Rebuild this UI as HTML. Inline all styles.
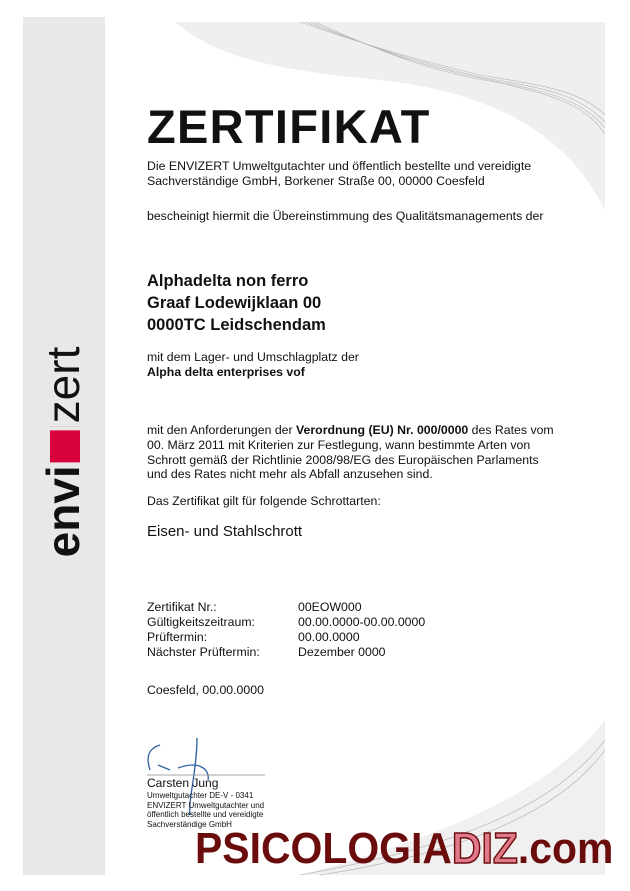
<!DOCTYPE html>
<html><head><meta charset="utf-8"><style>
body{margin:0;width:630px;height:891px;background:#fff;position:relative;overflow:hidden;font-family:"Liberation Sans",Arial,sans-serif;color:#111}
.t{position:absolute;left:147px;font-size:12.3px;line-height:15px;white-space:nowrap}
.b{font-weight:bold}
</style></head><body>
<div style="position:absolute;left:23px;top:17px;width:82px;height:858px;background:#e8e8e8"></div>
<svg style="position:absolute;left:0;top:0" width="630" height="891">
<path d="M175 22 L605 22 L605 210 C560 120 470 90 380 80 C280 70 220 60 175 22Z" fill="#efefef"/>
<g fill="none" stroke="#999" stroke-width="0.6" opacity="0.7">
<path d="M300 22 C380 50 420 60 480 75 C540 85 580 90 605 115"/>
<path d="M305 22 C385 52 425 64 485 78 C545 88 580 95 605 122"/>
<path d="M310 22 C390 55 430 68 490 80 C550 92 582 100 605 128"/>
<path d="M315 22 C395 58 435 72 495 82 C555 95 585 105 605 134"/>
</g>
<path d="M605 720 C560 780 470 830 300 875 L605 875Z" fill="#f0f0f0"/>
<g fill="none" stroke="#aaa" stroke-width="0.6"><path d="M605 740 C560 800 470 845 300 875"/><path d="M605 750 C565 805 480 850 320 875"/></g>
<path d="M150 770 C145 755 150 748 160 745 M158 765 L170 770 M197 738 C197 770 188 800 190 815 M178 768 C200 760 210 770 208 780" stroke="#3060a0" stroke-width="1.3" fill="none"/>
<line x1="147" y1="775" x2="265" y2="775" stroke="#888" stroke-width="0.8"/>
</svg>
<div style="position:absolute;left:63px;top:452px;transform:translate(-50%,-50%) rotate(-90deg);white-space:nowrap;font-size:46px;line-height:46px">
<span style="font-weight:bold;color:#111">envi</span><span style="display:inline-block;width:32px;height:30px;background:#d8003c;margin:0 3px;border-right:4px solid #e8e8e8;vertical-align:-1px"></span><span style="color:#111;font-weight:300">zert</span></div>
<div class="t b" style="top:103px;font-size:47px;line-height:47px;letter-spacing:1.3px">ZERTIFIKAT</div>
<div class="t" style="top:159px">Die ENVIZERT Umweltgutachter und öffentlich bestellte und vereidigte<br>Sachverständige GmbH, Borkener Straße 00, 00000 Coesfeld</div>
<div class="t" style="top:209px">bescheinigt hiermit die Übereinstimmung des Qualitätsmanagements der</div>
<div class="t b" style="top:270px;font-size:16.5px;line-height:22px">Alphadelta non ferro<br>Graaf Lodewijklaan 00<br>0000TC Leidschendam</div>
<div class="t" style="top:350px">mit dem Lager- und Umschlagplatz der<br><span class="b">Alpha delta enterprises vof</span></div>
<div class="t" style="top:423px;line-height:14.8px">mit den Anforderungen der <span class="b">Verordnung (EU) Nr. 000/0000</span> des Rates vom<br>00. März 2011 mit Kriterien zur Festlegung, wann bestimmte Arten von<br>Schrott gemäß der Richtlinie 2008/98/EG des Europäischen Parlaments<br>und des Rates nicht mehr als Abfall anzusehen sind.</div>
<div class="t" style="top:494px">Das Zertifikat gilt für folgende Schrottarten:</div>
<div class="t" style="top:524px;font-size:15px">Eisen- und Stahlschrott</div>
<div class="t" style="top:600px">Zertifikat Nr.:<br>Gültigkeitszeitraum:<br>Prüftermin:<br>Nächster Prüftermin:</div>
<div class="t" style="top:600px;left:298px">00EOW000<br>00.00.0000-00.00.0000<br>00.00.0000<br>Dezember 0000</div>
<div class="t" style="top:683px">Coesfeld, 00.00.0000</div>
<div class="t" style="top:777px;font-size:12px;line-height:13px">Carsten Jung</div>
<div class="t" style="top:791px;font-size:8px;line-height:9.5px">Umweltgutachter DE-V - 0341<br>ENVIZERT Umweltgutachter und<br>öffentlich bestellte und vereidigte<br>Sachverständige GmbH</div>
<div style="position:absolute;left:195px;top:824px;font-size:44px;line-height:50px;font-weight:bold;color:#6a0c0c;white-space:nowrap;transform:scaleX(0.93);transform-origin:left top">PSICOLOGIA<span style="color:#e07a8a;-webkit-text-stroke:1.5px #6a0c0c">DIZ</span>.com</div>
</body></html>
